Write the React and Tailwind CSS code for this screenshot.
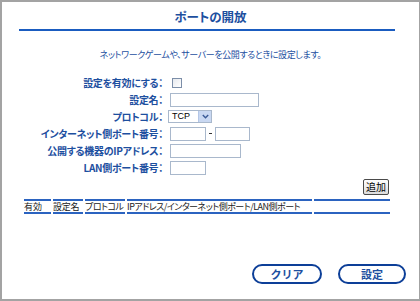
import React from "react";

const font = { fontFamily: '"Noto Sans CJK JP", "Liberation Sans", sans-serif' };

function Label({ children }) {
  return (
    <div className="h-[17px] flex items-center justify-end text-[10px] font-bold text-[#1d4f9f] leading-none tracking-[-0.3px] whitespace-nowrap [font-feature-settings:'palt']">
      {children}
    </div>
  );
}

function TextInput({ w }) {
  return <div className={`h-[14px] ${w} border border-[#a9b8cc] bg-white`} />;
}

export default function App() {
  return (
    <div
      className="w-[420px] h-[301px] box-border border-t-2 border-l-2 border-b-2 border-r border-[#a3a3a3] bg-white flex flex-col"
      style={font}
    >
      {/* title */}
      <div className="h-[27px] flex items-center justify-center pt-[3px]">
        <span className="text-[12.5px] font-bold text-[#1d4f9f] leading-none [font-feature-settings:'palt']">
          ポートの開放
        </span>
      </div>
      <div className="ml-[17px] w-[376px] h-[2px] bg-[#1a5cc0]" />

      {/* subtitle */}
      <div className="mt-[17px] h-[12px] flex items-center justify-center">
        <span className="text-[9px] text-[#1d4f9f] leading-none tracking-[-0.4px] whitespace-nowrap [font-feature-settings:'palt']">
          ネットワークゲームや、サーバーを公開するときに設定します。
        </span>
      </div>

      {/* form */}
      <div className="mt-[14px] grid grid-cols-[161px_1fr]">
        <div className="flex flex-col">
          <Label>設定を有効にする：</Label>
          <Label>設定名：</Label>
          <Label>プロトコル：</Label>
          <Label>インターネット側ポート番号：</Label>
          <Label>公開する機器のIPアドレス：</Label>
          <Label>LAN側ポート番号：</Label>
        </div>
        <div className="flex flex-col pl-[7px]">
          <div className="h-[17px] flex items-center pl-[2px]">
            <div className="w-[10px] h-[10px] border border-[#7c8ea8] bg-gradient-to-br from-[#e6e9ee] to-white" />
          </div>
          <div className="h-[17px] flex items-center">
            <TextInput w="w-[89px]" />
          </div>
          <div className="h-[17px] flex items-center -ml-[2px]">
            <div className="w-[44px] h-[13px] border border-[#a9b8cc] bg-white flex items-stretch">
              <span className="flex-1 text-[9px] leading-[11px] pl-[3px] text-black" style={{ fontFamily: '"Liberation Sans", sans-serif' }}>
                TCP
              </span>
              <div className="w-[13px] bg-[#c9d8f2] border-l border-[#b4c6e6] flex items-center justify-center">
                <svg width="7" height="5" viewBox="0 0 7 5">
                  <path d="M0.8 1 L3.5 3.8 L6.2 1" stroke="#3a5a96" strokeWidth="1.4" fill="none" />
                </svg>
              </div>
            </div>
          </div>
          <div className="h-[17px] flex items-center">
            <TextInput w="w-[36px]" />
            <div className="w-[9px] flex justify-center">
              <div className="w-[3px] h-[1.5px] bg-[#333]" />
            </div>
            <TextInput w="w-[35px]" />
          </div>
          <div className="h-[17px] flex items-center">
            <TextInput w="w-[71px]" />
          </div>
          <div className="h-[17px] flex items-center">
            <TextInput w="w-[36px]" />
          </div>
        </div>
      </div>

      {/* add button */}
      <div className="mt-[3px] w-[387px] flex justify-end">
        <div className="w-[26px] h-[16px] border border-[#4a4a4a] rounded-[2px] bg-gradient-to-b from-white to-[#dcdcdc] flex items-center justify-center text-[10px] text-black leading-none">
          追加
        </div>
      </div>

      {/* table header */}
      <div className="mt-[4px] ml-[22px] flex gap-[2px] text-[9px] text-[#222] leading-none whitespace-nowrap [font-feature-settings:'palt']">
        <div className="w-[27px] h-[15px] border-t-2 border-b-2 border-[#2b63c0] flex items-center">有効</div>
        <div className="w-[30px] h-[15px] border-t-2 border-b-2 border-[#2b63c0] flex items-center tracking-[-0.3px]">設定名</div>
        <div className="w-[40px] h-[15px] border-t-2 border-b-2 border-[#2b63c0] flex items-center tracking-[-0.5px] overflow-hidden">プロトコル</div>
        <div className="w-[185px] h-[15px] border-t-2 border-b-2 border-[#2b63c0] flex items-center tracking-[-0.5px]">
          IPアドレス/インターネット側ポート/LAN側ポート
        </div>
        <div className="w-[76px] h-[15px] border-t-2 border-b-2 border-[#2b63c0]" />
      </div>

      {/* bottom buttons */}
      <div className="flex-1" />
      <div className="mb-[15px] flex justify-end gap-[16px] pr-[13px]">
        <div className="w-[70px] h-[20px] border-2 border-[#0d3f98] rounded-full bg-white flex items-center justify-center text-[11px] font-bold text-[#1d4f9f] leading-none">
          クリア
        </div>
        <div className="w-[68px] h-[20px] border-2 border-[#0d3f98] rounded-full bg-white flex items-center justify-center text-[11px] font-bold text-[#1d4f9f] leading-none">
          設定
        </div>
      </div>
    </div>
  );
}
